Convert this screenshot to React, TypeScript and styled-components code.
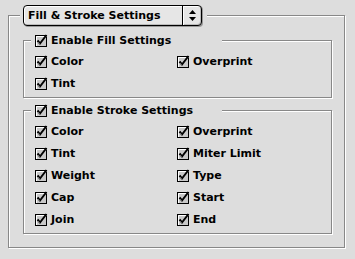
import React from 'react';
import styled, { createGlobalStyle } from 'styled-components';


const GlobalStyle = createGlobalStyle`
  html, body {
    margin: 0;
    padding: 0;
    background: #dddddd;
  }
  body {
    font-family: "DejaVu Sans", "Liberation Sans", sans-serif;
    font-size: 11px;
    font-weight: bold;
    color: #000;
  }
`;

const Page = styled.div`
  width: 355px;
  height: 259px;
  padding: 5px 0 0 8px;
  box-sizing: border-box;
  background: #dddddd;
`;

const Group = styled.fieldset<{ $inner?: boolean }>`
  margin: 0;
  padding: ${props => props.$inner ? '2px 0 3px 11px' : '7px 12px 13px 14px'};
  min-width: 0;
  width: ${props => props.$inner ? '309px' : '337px'};
  box-sizing: border-box;
  border: 1px solid #888888;
  box-shadow: inset 1px 1px 0 #ffffff, 1px 1px 0 #ffffff;
  & + & {
    margin-top: 5px;
  }
`;

const Legend = styled.legend<{ $wide?: boolean }>`
  margin-left: ${props => props.$wide ? '-4px' : '-3px'};
  padding: ${props => props.$wide ? '0 0 0 4px' : '0 5px 0 3px'};
  width: ${props => props.$wide ? '191px' : 'auto'};
  box-sizing: border-box;
  background: #dddddd;
  display: flex;
`;

const Popup = styled.div`
  display: flex;
  align-items: stretch;
  width: 179px;
  height: 21px;
  box-sizing: border-box;
  border: 1px solid #000;
  border-radius: 4px;
  background: #e6e6e6;
  box-shadow: inset 1px 1px 0 #ffffff, inset -1px -1px 0 #bbbbbb, 1px 1px 0 #999999;
`;

const PopupLabel = styled.div`
  flex: 1;
  display: flex;
  align-items: center;
  padding-left: 4px;
  white-space: nowrap;
`;

const PopupArrows = styled.div`
  width: 18px;
  display: flex;
  align-items: center;
  justify-content: center;
  border-left: 1px solid #000;
  box-shadow: inset 1px 0 0 #ffffff;
`;

const Grid = styled.div`
  display: grid;
  grid-template-columns: 142px 1fr;
  grid-auto-rows: 22px;
`;

const CheckRow = styled.label<{ $legend?: boolean }>`
  display: flex;
  align-items: center;
  gap: 3px;
  height: ${props => props.$legend ? '15px' : '100%'};
  white-space: nowrap;
  line-height: 15px;
`;

const Box = styled.svg`
  display: block;
  flex: 0 0 auto;
`;


function CheckBox() {
  return (
    <Box width={13} height={13} viewBox="0 0 13 13">
      <rect x={0.5} y={1.5} width={11} height={11} fill="#c8c8c8" stroke="#000" />
      <path d="M1.5 12V2.5h10" fill="none" stroke="#ffffff" strokeWidth={1} />
      <path d="M2.5 6.5 L5 9.5 L11.5 1" fill="none" stroke="#000" strokeWidth={2} />
      <path d="M3 8 L5 10.5" fill="none" stroke="#777" strokeWidth={1} />
    </Box>
  );
}

function Arrows() {
  return (
    <svg width={7} height={11} viewBox="0 0 7 11">
      <path d="M3.5 0 L7 4 H0 Z" fill="#000" />
      <path d="M0 7 H7 L3.5 11 Z" fill="#000" />
    </svg>
  );
}

interface ICheckProps {
  label: string;
  legend?: boolean;
}

function Check(props: ICheckProps) {
  return (
    <CheckRow $legend={props.legend}>
      <CheckBox />
      <span>{ props.label }</span>
    </CheckRow>
  );
}

const fillItems = ['Color', 'Overprint', 'Tint'];
const strokeItems = [
  'Color', 'Overprint',
  'Tint', 'Miter Limit',
  'Weight', 'Type',
  'Cap', 'Start',
  'Join', 'End',
];


function App() {
  return (
    <Page>
      <GlobalStyle />
      <Group>
        <Legend>
          <Popup>
            <PopupLabel>Fill &amp; Stroke Settings</PopupLabel>
            <PopupArrows><Arrows /></PopupArrows>
          </Popup>
        </Legend>
        <Group $inner>
          <Legend $wide>
            <Check legend label={'Enable Fill Settings'} />
          </Legend>
          <Grid>
            { fillItems.map((item, i) => <Check key={i} label={item} />) }
          </Grid>
        </Group>
        <Group $inner>
          <Legend $wide>
            <Check legend label={'Enable Stroke Settings'} />
          </Legend>
          <Grid>
            { strokeItems.map((item, i) => <Check key={i} label={item} />) }
          </Grid>
        </Group>
      </Group>
    </Page>
  );
}

export default App;
